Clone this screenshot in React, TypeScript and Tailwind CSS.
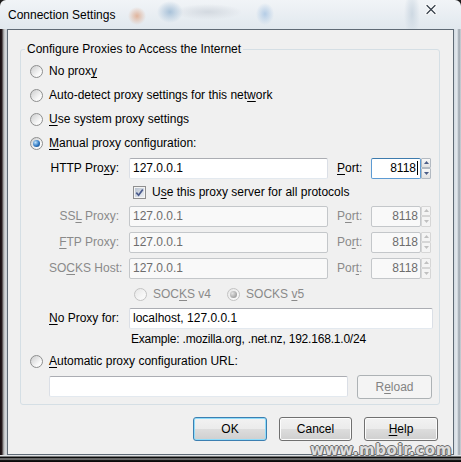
import React from "react";

const FONT = "font-['Liberation_Sans',Arial,sans-serif]";

function Radio({ checked = false, disabled = false }: { checked?: boolean; disabled?: boolean }) {
  return (
    <span
      className={`w-[13px] h-[13px] shrink-0 rounded-full border flex items-center justify-center ${
        disabled
          ? "border-[#c3c3c3] bg-[linear-gradient(135deg,#e6e6e6,#f8f8f8_70%)]"
          : "border-[#8e8f8f] bg-[linear-gradient(135deg,#cbcccd,#f9f9f9_70%)]"
      }`}
    >
      {checked && (
        <span
          className={`w-[7px] h-[7px] rounded-full ${
            disabled
              ? "bg-[radial-gradient(circle_at_35%_35%,#e4e4e4,#a3a3a3_70%)]"
              : "bg-[radial-gradient(circle_at_35%_35%,#bfe3fb,#2f78c3_55%,#123a6a)]"
          }`}
        />
      )}
    </span>
  );
}

function Check() {
  return (
    <span className="w-[13px] h-[13px] shrink-0 border border-[#8f8f8f] bg-[#f4f4f4] p-[1px] flex">
      <span className="flex-1 bg-[linear-gradient(135deg,#b9c2cf,#eceff4)] flex items-center justify-center">
        <svg width="9" height="9" viewBox="0 0 9 9">
          <path d="M1.3 4.6 L3.6 7.2 L7.8 1.4" fill="none" stroke="#4a5a8c" strokeWidth="1.7" />
        </svg>
      </span>
    </span>
  );
}

function Field({
  value,
  w,
  disabled = false,
  right = false,
  focus = false,
}: {
  value: string;
  w: string;
  disabled?: boolean;
  right?: boolean;
  focus?: boolean;
}) {
  const border = focus
    ? "border-[#5d9bd3] border-t-[#3d7bad]"
    : disabled
    ? "border-[#c4c7ca]"
    : "border-[#abadb3] border-l-[#dbdfe6] border-r-[#dbdfe6] border-b-[#e3e9ef]";
  return (
    <div
      className={`${w} h-[21px] shrink-0 border rounded-[2px] flex items-center ${border} ${
        disabled ? "bg-[#f9f9f9] text-[#6d6d6d]" : "bg-white text-black"
      } ${right ? "justify-end pr-[2px]" : "pl-[3px]"}`}
    >
      <span>{value}</span>
      {focus && <span className="w-px h-[14px] bg-black ml-px" />}
    </div>
  );
}

function Spin({ disabled = false }: { disabled?: boolean }) {
  const c = disabled ? "#c0c0c0" : "#4c5d86";
  const box = disabled
    ? "border-[#d6d6d6] bg-[#f4f4f4]"
    : "border-[#b3bac2] bg-[linear-gradient(#f8f8f8,#e2e2e2)]";
  return (
    <div className="w-[10px] h-[21px] shrink-0 flex flex-col">
      <div className={`h-[10px] border rounded-[1px] flex items-center justify-center ${box}`}>
        <svg width="5" height="3" viewBox="0 0 5 3">
          <path d="M0 3L2.5 0L5 3Z" fill={c} />
        </svg>
      </div>
      <div className={`h-[11px] border rounded-[1px] flex items-center justify-center ${box}`}>
        <svg width="5" height="3" viewBox="0 0 5 3">
          <path d="M0 0L5 0L2.5 3Z" fill={c} />
        </svg>
      </div>
    </div>
  );
}

function Btn({
  children,
  primary = false,
  disabled = false,
  w = "w-[74px]",
}: {
  children: React.ReactNode;
  primary?: boolean;
  disabled?: boolean;
  w?: string;
}) {
  const look = disabled
    ? "border-[#adb2b5] bg-[#f4f4f4] text-[#838383]"
    : primary
    ? "border-[#3c7fb1] bg-[linear-gradient(#f2f2f2_0%,#ebebeb_50%,#dddddd_50%,#cfcfcf_100%)] shadow-[inset_0_0_0_1px_#8fdcfa] text-black"
    : "border-[#707070] bg-[linear-gradient(#f2f2f2_0%,#ebebeb_50%,#dddddd_50%,#cfcfcf_100%)] shadow-[inset_0_0_0_1px_#fcfcfc] text-black";
  return (
    <div className={`${w} h-[24px] shrink-0 border rounded-[3px] flex items-center justify-center ${look}`}>
      {children}
    </div>
  );
}

function U({ children }: { children: React.ReactNode }) {
  return <span className="underline underline-offset-[2px]">{children}</span>;
}

function ProxyRow({
  label,
  host,
  port,
  disabled = false,
  portLabel,
}: {
  label: React.ReactNode;
  host: string;
  port: string;
  disabled?: boolean;
  portLabel: React.ReactNode;
}) {
  const lc = disabled ? "text-[#8a8a8a]" : "text-black";
  return (
    <div className="h-[26px] flex items-center pl-[28px]">
      <div className={`w-[70px] text-right whitespace-nowrap ${lc}`}>{label}</div>
      <div className="ml-[10px]">
        <Field value={host} w="w-[199px]" disabled={disabled} />
      </div>
      <div className={`ml-[9px] w-[34px] ${lc}`}>{portLabel}</div>
      <div className="flex">
        <Field value={port} w="w-[50px]" disabled={disabled} right focus={!disabled} />
        <Spin disabled={disabled} />
      </div>
    </div>
  );
}

export default function App() {
  return (
    <div
      className={`${FONT} text-[12px] leading-[16px] w-[461px] h-[462px] flex flex-col overflow-hidden relative bg-[#1c1c1c]`}
    >
      {/* title bar over blurred glass */}
      <div className="h-[29px] shrink-0 flex justify-between rounded-t-[6px] bg-[image:radial-gradient(ellipse_9px_9px_at_137px_16px,#e0b49c,transparent),radial-gradient(ellipse_13px_11px_at_170px_12px,#a9c2d9,transparent),radial-gradient(ellipse_34px_8px_at_208px_12px,#d3d9e0,transparent),radial-gradient(ellipse_9px_11px_at_265px_14px,#b5cde6,transparent),radial-gradient(ellipse_8px_24px_at_412px_14px,#cdd8e2,transparent),linear-gradient(#f1f4f7,#e1e8ee)]">
        <span className="self-center pl-[8px] pt-[1px] text-black text-[12px]">Connection Settings</span>
        <svg className="mt-[4px] mr-[24px]" width="12" height="11" viewBox="0 0 12 11">
          <path d="M2 1.5 L10 9.5 M10 1.5 L2 9.5" stroke="#ffffff" strokeWidth="3.2" strokeLinecap="round" />
          <path d="M2 1.5 L10 9.5 M10 1.5 L2 9.5" stroke="#36404b" strokeWidth="1.3" strokeLinecap="round" />
        </svg>
      </div>

      <div className="h-[426px] shrink-0 flex">
        {/* left glass edge */}
        <div className="w-[7px] shrink-0 bg-[linear-gradient(90deg,#140c0e_0px,#2a1c1f_2px,#8c8c8c_3px,#d6d8da_5px,#c9ced3_7px)]" />

        {/* client area */}
        <div className="w-[447px] shrink-0 border border-[#5f6a75] bg-[#f0f0f0] flex flex-col">
          <fieldset className="mt-[11px] ml-[12px] mr-[13px] border border-[#d5dfe5] rounded-[3px] pt-[2px] pb-[4px] px-0 min-w-0">
            <legend className="ml-[4px] px-[2px] text-black leading-[16px]">
              Configure Proxies to Access the Internet
            </legend>

            <div className="h-[24px] flex items-center pl-[9px] gap-[6px]">
              <Radio />
              <span>
                No prox<U>y</U>
              </span>
            </div>
            <div className="h-[24px] flex items-center pl-[9px] gap-[6px]">
              <Radio />
              <span>
                Auto-detect proxy settings for this net<U>w</U>ork
              </span>
            </div>
            <div className="h-[24px] flex items-center pl-[9px] gap-[6px]">
              <Radio />
              <span>
                <U>U</U>se system proxy settings
              </span>
            </div>
            <div className="h-[24px] flex items-center pl-[9px] gap-[6px]">
              <Radio checked />
              <span>
                <U>M</U>anual proxy configuration:
              </span>
            </div>

            <ProxyRow
              label={
                <>
                  HTTP Pro<U>x</U>y:
                </>
              }
              host="127.0.0.1"
              port="8118"
              portLabel={
                <>
                  <U>P</U>ort:
                </>
              }
            />

            <div className="h-[22px] flex items-center pl-[112px] gap-[6px]">
              <Check />
              <span>
                U<U>s</U>e this proxy server for all protocols
              </span>
            </div>

            <ProxyRow
              disabled
              label={
                <>
                  SS<U>L</U> Proxy:
                </>
              }
              host="127.0.0.1"
              port="8118"
              portLabel={
                <>
                  P<U>o</U>rt:
                </>
              }
            />
            <ProxyRow
              disabled
              label={
                <>
                  <U>F</U>TP Proxy:
                </>
              }
              host="127.0.0.1"
              port="8118"
              portLabel={
                <>
                  Po<U>r</U>t:
                </>
              }
            />
            <ProxyRow
              disabled
              label={
                <>
                  SO<U>C</U>KS Host:
                </>
              }
              host="127.0.0.1"
              port="8118"
              portLabel={
                <>
                  Por<U>t</U>:
                </>
              }
            />

            <div className="h-[26px] flex items-center pl-[113px] text-[#8a8a8a]">
              <Radio disabled />
              <span className="ml-[6px]">
                SOC<U>K</U>S v4
              </span>
              <span className="ml-[16px]">
                <Radio checked disabled />
              </span>
              <span className="ml-[6px]">
                SOCKS <U>v</U>5
              </span>
            </div>

            <div className="h-[22px] flex items-center pl-[28px]">
              <div className="w-[70px] text-right whitespace-nowrap">
                <U>N</U>o Proxy for:
              </div>
              <div className="ml-[10px]">
                <Field value="localhost, 127.0.0.1" w="w-[304px]" />
              </div>
            </div>

            <div className="h-[20px] flex items-center pl-[110px] tracking-[-0.2px]">
              Example: .mozilla.org, .net.nz, 192.168.1.0/24
            </div>

            <div className="h-[24px] flex items-center pl-[9px] gap-[6px]">
              <Radio />
              <span>
                <U>A</U>utomatic proxy configuration URL:
              </span>
            </div>

            <div className="h-[27px] flex items-center pl-[28px]">
              <Field value="" w="w-[299px]" />
              <div className="ml-[9px]">
                <Btn disabled w="w-[75px]">
                  <span>
                    R<U>e</U>load
                  </span>
                </Btn>
              </div>
            </div>
          </fieldset>

          <div className="mt-[12px] flex justify-end gap-[12px] pr-[15px]">
            <Btn primary>OK</Btn>
            <Btn w="w-[73px]">Cancel</Btn>
            <Btn>
              <span>
                <U>H</U>elp
              </span>
            </Btn>
          </div>
        </div>

        {/* right glass edge */}
        <div className="w-[7px] shrink-0 bg-[linear-gradient(90deg,#d4dbe2_0px,#e4e9ee_3px,#9aa3ac_5px,#cfd5da_7px)]" />
      </div>

      {/* bottom glass edge */}
      <div className="h-[7px] shrink-0 bg-[linear-gradient(#dfe2e5_0px,#dfe2e5_1px,#0d0d0d_2px,#0d0d0d_3px,#bdbdbd_4px,#1a1a1a_5px,#050505_7px)]" />

      {/* site stamp in the corner */}
      <span className="absolute right-[9px] bottom-[4px] font-['DejaVu_Sans',sans-serif] font-bold text-[15px] leading-[15px] tracking-[0.6px] text-[#dedede] [text-shadow:1px_0_0_#6f6f6f,-1px_0_0_#6f6f6f,0_1px_0_#6f6f6f,0_-1px_0_#6f6f6f,1px_1px_0_#6f6f6f]">
        www.mboir.com
      </span>
    </div>
  );
}
